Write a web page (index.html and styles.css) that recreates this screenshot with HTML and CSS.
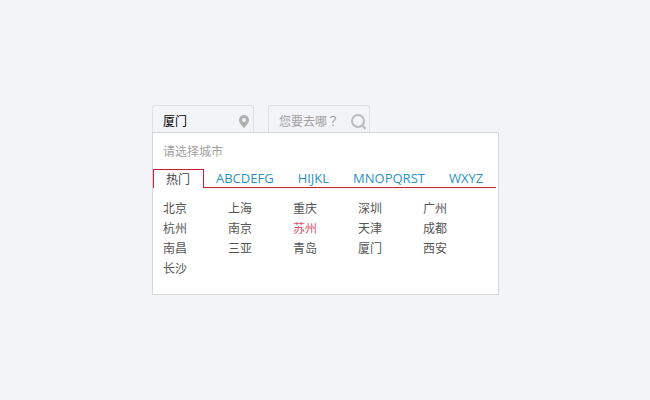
FILE: index.html
```html
<!DOCTYPE html>
<html lang="zh-CN">
<head>
<meta charset="utf-8">
<title>选择城市</title>
<link rel="stylesheet" href="styles.css">
</head>
<body>
<main class="picker">
  <form class="fields">
    <div class="field">
      <input class="field-input" type="text" value="厦门" aria-label="出发城市">
      <svg class="pin" viewBox="0 0 10 14" aria-hidden="true"><path fill-rule="evenodd" d="M5 0a5 5 0 0 0-5 5c0 3.500 3 5 5 8.500 2-3.500 5-5 5-8.500a5 5 0 0 0-5-5zm0 3a2 2 0 1 1 0 4 2 2 0 0 1 0-4z"/></svg>
    </div>
    <div class="field">
      <input class="field-input" type="text" lang="zh-Hant" placeholder="您要去哪？" aria-label="目的城市">
      <svg class="search" viewBox="0 0 16 16" aria-hidden="true"><circle cx="7" cy="7" r="6"/><path d="M11.500 11.500L14.500 15"/></svg>
    </div>
  </form>
  <section class="panel">
    <p class="hint">请选择城市</p>
    <nav class="tabs">
      <a class="tab tab-active" href="#hot">热门</a>
      <a class="tab" href="#a-g">ABCDEFG</a>
      <a class="tab" href="#h-l">HIJKL</a>
      <a class="tab" href="#m-t">MNOPQRST</a>
      <a class="tab" href="#w-z">WXYZ</a>
    </nav>
    <div class="cities" id="hot">
      <a class="city" href="#">北京</a>
      <a class="city" href="#">上海</a>
      <a class="city" href="#">重庆</a>
      <a class="city" href="#">深圳</a>
      <a class="city" href="#">广州</a>
      <a class="city" href="#">杭州</a>
      <a class="city" href="#">南京</a>
      <a class="city city-current" href="#">苏州</a>
      <a class="city" href="#">天津</a>
      <a class="city" href="#">成都</a>
      <a class="city" href="#">南昌</a>
      <a class="city" href="#">三亚</a>
      <a class="city" href="#">青岛</a>
      <a class="city" href="#">厦门</a>
      <a class="city" href="#">西安</a>
      <a class="city" href="#">长沙</a>
    </div>
  </section>
</main>
</body>
</html>
```
FILE: styles.css
```css
* {
  box-sizing: border-box;
}

body {
  margin: 0;
  padding: 105px 0 0 1px;
  background: #f2f4f8;
  color: #555;
  font: 12px/20px "Open Sans", "Noto Sans CJK SC", sans-serif;
}

a {
  color: inherit;
  text-decoration: none;
}

.picker {
  max-width: 347px;
  margin: 0 auto;
}

.fields {
  display: flex;
  gap: 14px;
}

.field {
  display: flex;
  align-items: center;
  width: 102px;
  height: 27px;
  padding: 6px 4px 0 10px;
  border: 1px solid #dddfe3;
  border-bottom: 0;
  border-radius: 3px 3px 0 0;
}

.field-input {
  flex: 1;
  min-width: 0;
  padding: 0;
  border: 0;
  outline: 0;
  background: none;
  color: #000;
  font: inherit;
}

.field-input::placeholder {
  color: #a0a0a0;
  font-family: "Noto Sans CJK TC", sans-serif;
  opacity: 1;
}

.pin {
  width: 10px;
  height: 14px;
  fill: #b0b0b0;
}

.search {
  width: 16px;
  height: 16px;
  margin-right: -2px;
  fill: none;
  stroke: #bbb;
  stroke-width: 2;
}

.panel {
  padding-bottom: 15px;
  border: 1px solid #d5d7da;
  background: #fff;
}

.hint {
  margin: 0;
  padding: 9px 10px 7px;
  color: #a0a0a0;
}

.tabs {
  display: flex;
  height: 19px;
  margin-right: 2px;
  border-bottom: 1px solid #c4202f;
}

.tab {
  padding: 0 12px;
  color: #2a93c4;
  font-size: 13px;
  line-height: 18px;
}

.tab-active {
  height: 19px;
  width: 51px;
  border: 1px solid #c4202f;
  border-bottom: 0;
  background: #fff;
  color: #444;
  font-size: 12px;
  line-height: 20px;
}

.cities {
  display: grid;
  grid-template-columns: repeat(5, 65px);
  padding: 11px 10px 0;
}

.city-current {
  color: #dd5067;
}
```
